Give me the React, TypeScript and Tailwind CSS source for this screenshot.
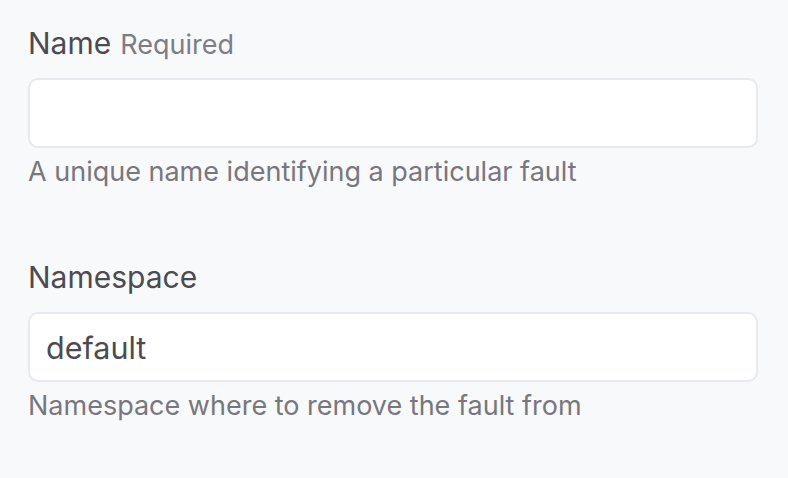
const fields = [
  {
    label: 'Name',
    required: true,
    value: '',
    help: 'A unique name identifying a particular fault',
  },
  {
    label: 'Namespace',
    required: false,
    value: 'default',
    help: 'Namespace where to remove the fault from',
  },
];

export default function App() {
  return (
    <div
      className="min-h-screen bg-[#f8f9fb] pl-[28px] pr-[30px] pt-[23px]"
      style={{ fontFamily: 'Inter, "Noto Sans", sans-serif' }}
    >
      <div className="flex flex-col gap-[68px]">
        {fields.map((field) => (
          <div key={field.label} className="flex flex-col">
            <label className="text-[30px] leading-[40px] text-[#4b4b50]">
              {field.label}
              {field.required && (
                <span className="ml-[9px] text-[27px] leading-none text-[#7d7d83]">Required</span>
              )}
            </label>
            <input
              readOnly
              value={field.value}
              className="mt-[15px] h-[70px] w-full rounded-[10px] border-2 border-[#e8e9ee] bg-white px-[16px] text-[30.5px] text-[#4b4b50] outline-none"
            />
            <p className="mt-[7px] text-[27px] leading-[34px] text-[#77777d]">{field.help}</p>
          </div>
        ))}
      </div>
    </div>
  );
}
